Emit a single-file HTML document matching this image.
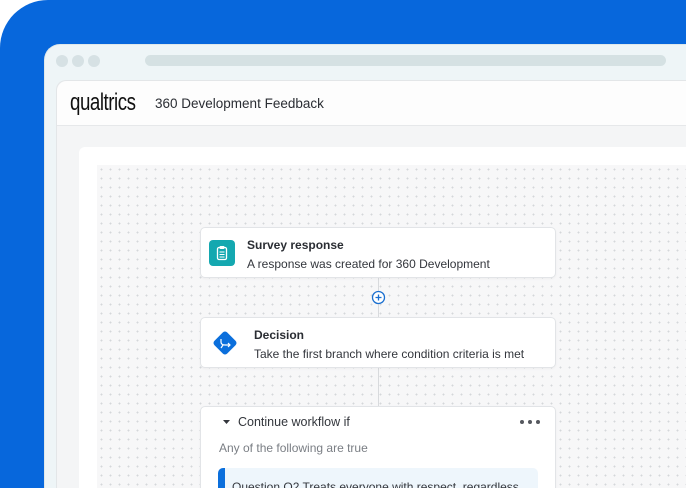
<!DOCTYPE html>
<html style="width:686px;height:488px;overflow:hidden"><head><meta charset="utf-8"><style>
*{margin:0;padding:0;box-sizing:border-box}
body{width:686px;height:488px;overflow:hidden;background:#fff;font-family:"Liberation Sans",sans-serif;position:relative}
.blue{position:absolute;left:0;top:0;width:686px;height:488px;background:#0767dc;border-top-left-radius:48px}
.win{position:absolute;left:44px;top:44px;width:642px;height:444px;background:#eef5f7;border-top-left-radius:16px;border:1px solid #dfe8ea;border-right:none;border-bottom:none}
.dot{position:absolute;top:10px;width:12px;height:12px;border-radius:50%;background:#d6e1e4}
.addr{position:absolute;left:100px;top:10px;width:521px;height:11px;border-radius:6px;background:#d5e1e3}
.app{position:absolute;left:56px;top:80px;width:630px;height:408px;background:#f4f5f6;border-top-left-radius:10px;border:1px solid #e3e6e8;border-right:none;border-bottom:none}
.hdr{position:absolute;left:0;top:0;right:0;height:45px;background:#fdfdfd;border-bottom:1px solid #e6e8ea;border-top-left-radius:10px}
.logo{position:absolute;left:13px;top:8px;font-size:24px;color:#111;letter-spacing:-0.6px;transform:scaleX(0.78);transform-origin:left}
.title{position:absolute;left:98px;top:15px;font-size:13.5px;color:#2a2d33}
.panel{position:absolute;left:79px;top:147px;width:607px;height:341px;background:#fff;border-top-left-radius:6px}
.grid{position:absolute;left:97px;top:165px;width:589px;height:323px;background-color:#f7f7f8;background-image:radial-gradient(circle,#d4d7da 0.8px,transparent 1.1px);background-size:9px 9px}
.line{position:absolute;left:378px;width:1px;background:#d8dadd}
.card{position:absolute;left:200px;width:356px;background:#fff;border:1px solid #e2e4e7;border-radius:5px;box-shadow:0 1px 2px rgba(0,0,0,.04)}
.t1{position:absolute;font-size:12px;font-weight:bold;color:#2a2d33;white-space:nowrap}
.t2{position:absolute;font-size:12px;color:#33363c;white-space:nowrap}
</style></head><body>
<div class="blue"></div>
<div class="win"><div class="dot" style="left:11px"></div><div class="dot" style="left:27px"></div><div class="dot" style="left:43px"></div><div class="addr"></div></div>
<div class="app"><div class="hdr"><div class="logo">qualtrics</div><div class="title">360 Development Feedback</div></div></div>
<div class="panel"></div>
<div class="grid"></div>
<div class="line" style="top:278px;height:40px"></div>
<div class="line" style="top:368px;height:40px"></div>
<svg style="position:absolute;left:371px;top:290px" width="15" height="15"><circle cx="7.5" cy="7.5" r="6" fill="#fff" stroke="#1a6fd0" stroke-width="1.3"/><path d="M7.5 4.5v6M4.5 7.5h6" stroke="#1a6fd0" stroke-width="1.3"/></svg>
<div class="card" style="top:227px;height:51px">
<svg style="position:absolute;left:8px;top:12px" width="26" height="26"><rect width="26" height="26" rx="4" fill="#14a8b0"/><rect x="8.5" y="7.5" width="9" height="12" rx="1.5" fill="none" stroke="#fff" stroke-width="1.3"/><rect x="10.5" y="6" width="5" height="3" rx="1" fill="#fff"/><path d="M10.5 12h5M10.5 14.5h5M10.5 17h5" stroke="#fff" stroke-width="1"/></svg>
<div class="t1" style="left:46px;top:10px">Survey response</div>
<div class="t2" style="left:46px;top:29px">A response was created for 360 Development</div>
</div>
<div class="card" style="top:317px;height:51px">
<svg style="position:absolute;left:10px;top:11px" width="28" height="28"><rect x="5" y="5" width="18" height="18" rx="3" fill="#0b6fdc" transform="rotate(45 14 14)"/><path d="M10 10v3q0 3 4 3h5M17 14l2 2-2 2M12 16l-2 3" stroke="#fff" stroke-width="1.2" fill="none"/></svg>
<div class="t1" style="left:53px;top:10px">Decision</div>
<div class="t2" style="left:53px;top:29px">Take the first branch where condition criteria is met</div>
</div>
<div class="card" style="top:406px;height:100px">
<svg style="position:absolute;left:21px;top:11px" width="10" height="8"><path d="M1 2h7L4.5 6z" fill="#33363c"/></svg>
<div class="t2" style="left:37px;top:8px;font-size:12.5px">Continue workflow if</div>
<div style="position:absolute;left:319px;top:13px;width:4px;height:4px;border-radius:50%;background:#55585e;box-shadow:8px 0 #55585e,16px 0 #55585e"></div>
<div class="t2" style="left:18px;top:34px;color:#7a7e84">Any of the following are true</div>
<div style="position:absolute;left:17px;top:61px;width:320px;height:40px;background:#eef6fc;border-radius:5px;overflow:hidden"><div style="position:absolute;left:0;top:0;width:7px;height:40px;background:#0b6fdc"></div><div class="t2" style="left:14px;top:12px">Question Q2 Treats everyone with respect, regardless</div></div>
</div>
</body></html>
